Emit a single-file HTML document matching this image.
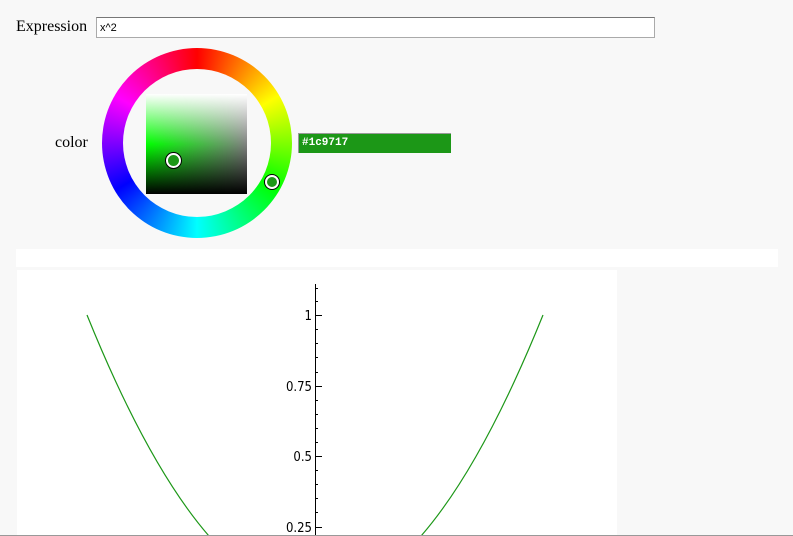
<!DOCTYPE html>
<html style="overflow:hidden"><head><style>
html,body{margin:0;width:793px;height:536px;overflow:hidden}
body{background:#f8f8f8;position:relative;font-family:"Liberation Serif",serif}
.abs{position:absolute}
</style></head><body>
<div class="abs" style="left:16px;top:17px;font-size:16px;line-height:20px">Expression</div>
<div class="abs" style="left:96px;top:17px;width:559px;height:21px;background:#fff;border:1px solid #aaa;border-top-color:#777;font:11px 'Liberation Sans',sans-serif;line-height:20px;padding-left:3px;box-sizing:border-box">x^2</div>
<div class="abs" style="left:55px;top:133px;font-size:16px;line-height:20px">color</div>
<div class="abs" style="left:102px;top:48px;width:190px;height:190px;border-radius:50%;background:conic-gradient(#f00,#ff0 60deg,#0f0 120deg,#0ff 180deg,#00f 240deg,#f0f 300deg,#f00 360deg)"></div>
<div class="abs" style="left:123px;top:69px;width:148px;height:148px;border-radius:50%;background:#f8f8f8"></div>
<div class="abs" style="left:146px;top:94px;width:101px;height:100px;background:linear-gradient(to bottom,#fff,rgba(255,255,255,0) 50%,rgba(0,0,0,0) 50%,#000),linear-gradient(to right,rgba(128,128,128,0),#808080),#0f0"></div>
<div class="abs" style="left:166px;top:153px;width:11px;height:11px;border-radius:50%;border:2px solid #fff;background:#1c9717;box-shadow:0 0 0 1px #000"></div>
<div class="abs" style="left:265px;top:175px;width:10px;height:10px;border-radius:50%;border:2px solid #fff;background:#1c9717;box-shadow:0 0 0 1px #000"></div>
<div class="abs" style="left:298px;top:133px;background:#1c9717;border:1px solid #999;border-right:none;border-bottom:none;color:#fff;font:bold 11px 'Liberation Mono',monospace;line-height:19px;padding-left:3px;box-sizing:border-box;width:153px;height:20px">#1c9717</div>
<div class="abs" style="left:16px;top:249px;width:762px;height:18px;background:#fff"></div>
<div class="abs" style="left:17px;top:270px;width:600px;height:266px;background:#fff"></div>
<svg class="abs" style="left:0;top:0" width="793" height="536">
<g stroke="#000" stroke-width="1">
<line x1="315.5" y1="284" x2="315.5" y2="536"/>
<line x1="315" y1="315.5" x2="322" y2="315.5"/>
<line x1="315" y1="386.5" x2="322" y2="386.5"/>
<line x1="315" y1="456.5" x2="322" y2="456.5"/>
<line x1="315" y1="527.5" x2="322" y2="527.5"/>
<path d="M315 301.5h3M315 329.5h3M315 343.5h3M315 357.5h3M315 372.5h3M315 400.5h3M315 414.5h3M315 428.5h3M315 442.5h3M315 470.5h3M315 484.5h3M315 498.5h3M315 512.5h3M315 288.5h3"/>
</g>
<g font-family="DejaVu Sans Condensed,DejaVu Sans,sans-serif" font-size="13" text-anchor="end" fill="#000">
<text x="312" y="320">1</text><text x="312" y="391">0.75</text><text x="312" y="461">0.5</text><text x="312" y="532">0.25</text>
</g>
<path fill="none" stroke="#1c9717" stroke-width="1.2" d="M87 315 Q201 597 315 597 Q429 597 543 315"/>
<line x1="0" y1="535.5" x2="793" y2="535.5" stroke="#999"/>
</svg>
</body></html>
